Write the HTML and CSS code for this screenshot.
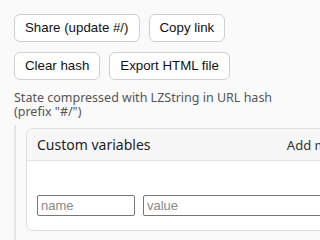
FILE: index.html
```html
<!DOCTYPE html>
<html>
<head>
<meta charset="utf-8">
<link rel="stylesheet" href="styles.css">
</head>
<body>
<div class="page">
  <div class="btn-row">
    <button class="btn">Share (update #/)</button>
    <button class="btn">Copy link</button>
  </div>
  <div class="btn-row">
    <button class="btn">Clear hash</button>
    <button class="btn">Export HTML file</button>
  </div>
  <p class="note">State compressed with LZString in URL hash (prefix "#/")</p>
  <div class="section">
    <div class="card">
      <div class="card-head">
        <span class="card-title">Custom variables</span>
        <span class="card-action">Add more</span>
      </div>
      <div class="card-body">
        <div class="var-row">
          <input class="inp inp-name" placeholder="name">
          <input class="inp inp-value" placeholder="value">
        </div>
      </div>
    </div>
  </div>
</div>
</body>
</html>
```

FILE: styles.css
```css
html, body {
  margin: 0;
  padding: 0;
  background: #fafafa;
  overflow: hidden;
}
.page {
  padding: 14px 0 0 14px;
  width: 344px;
}
.btn-row {
  display: flex;
  gap: 9px;
  margin-bottom: 10px;
}
.btn {
  font-family: "Liberation Sans", Arial, sans-serif;
  font-size: 13.3px;
  line-height: 16px;
  color: #111;
  background: #fff;
  border: 1px solid #cfcfcf;
  border-radius: 6px;
  padding: 5px 10px;
}
.note {
  font-family: "Noto Sans", "DejaVu Sans", sans-serif;
  font-size: 12.5px;
  line-height: 14px;
  color: #555;
  margin: 11px 0 0 0;
  width: 280px;
}
.section {
  margin-top: 6px;
  border-left: 2px solid #e6e6e6;
  padding: 3px 0 10px 10px;
}
.card {
  border: 1px solid #dedede;
  border-radius: 7px;
  background: #fff;
  overflow: hidden;
}
.card-head {
  display: flex;
  justify-content: space-between;
  align-items: center;
  background: #f7f7f7;
  border-bottom: 1px solid #e3e3e3;
  height: 31px;
  padding: 0 10px;
  font-family: "Noto Sans", "DejaVu Sans", sans-serif;
  font-size: 14px;
  color: #222;
}
.card-action {
  font-size: 13px;
  color: #333;
}
.card-body {
  padding: 34px 10px 14px 10px;
}
.var-row {
  display: flex;
  gap: 8px;
}
.inp {
  font-family: "Liberation Sans", Arial, sans-serif;
  font-size: 13px;
  height: 21px;
  box-sizing: border-box;
  border: 1px solid #767676;
  border-radius: 2px;
  padding: 1px 3px;
  background: #fff;
}
.inp::placeholder {
  color: #888;
}
.inp-name {
  width: 98px;
}
.inp-value {
  width: 200px;
}
```
